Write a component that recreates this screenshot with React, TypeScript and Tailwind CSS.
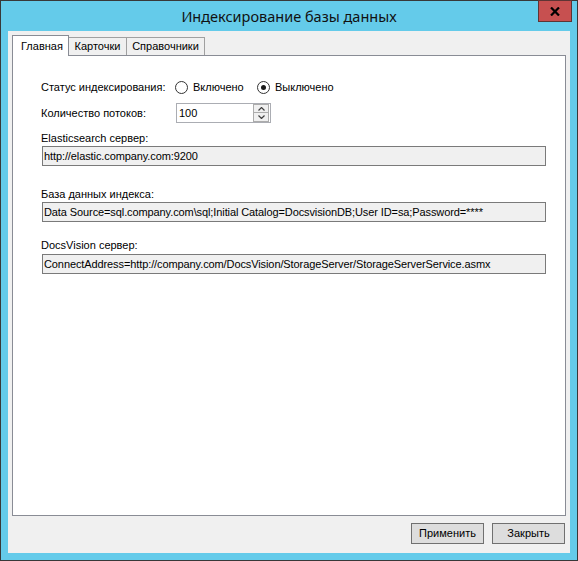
import React from "react";

function Radio({ checked }: { checked?: boolean }) {
  return (
    <span className="w-[13px] h-[13px] rounded-full border border-[#333333] bg-white flex items-center justify-center shrink-0">
      {checked && <span className="w-[5px] h-[5px] rounded-full bg-[#1a1a1a]" />}
    </span>
  );
}

function Field({ label, value, gapTop, gapMid }: { label: string; value: string; gapTop: string; gapMid: string }) {
  return (
    <>
      <div className={`${gapTop} h-[14px] flex items-center pl-[28px] text-black`}>{label}</div>
      <div className={`${gapMid} ml-[29px] w-[504px] h-[20px] border border-[#7a7a7a] bg-[#f0f0f0] flex items-center pl-[1px] text-black whitespace-nowrap overflow-hidden tracking-[-0.1px]`}>
        {value}
      </div>
    </>
  );
}

export default function App() {
  return (
    <div className="w-[578px] h-[561px] bg-[#64cbea] border border-[#383838] flex flex-col relative font-['Liberation_Sans',Arial,sans-serif] text-[11px] leading-[13px]">
      <div className="h-[30px] flex items-center justify-center text-[14.5px] text-[#111111] font-['Noto_Sans',sans-serif]">
        Индексирование базы данных
      </div>
      <div className="absolute top-[-1px] right-[5px] w-[34px] h-[22px] bg-[#c75050] border border-[#5e3434] flex items-center justify-center">
        <svg width="10" height="9" viewBox="0 0 10 9">
          <path d="M1 0.5 L9 8.5 M9 0.5 L1 8.5" stroke="#000" strokeWidth="2.2" />
        </svg>
      </div>

      <div className="flex-1 mx-[7px] mb-[7px] bg-[#f0f0f0] flex flex-col px-[4px] pt-[4px]">
        <div className="flex items-end h-[20px]">
          <div className="relative z-10 w-[57px] h-[21px] -mb-px bg-white border border-b-0 border-[#898c95] flex items-start pt-[4px] pl-[8px] text-black">
            Главная
          </div>
          <div className="w-[59px] h-[18px] -ml-px bg-[#f0f0f0] border border-b-0 border-[#a0a0a0] flex items-center justify-center text-black">
            Карточки
          </div>
          <div className="w-[79px] h-[18px] -ml-px bg-[#f0f0f0] border border-b-0 border-[#a0a0a0] flex items-center justify-center text-black">
            Справочники
          </div>
        </div>
        <div className="flex-1 bg-white border border-[#898c95] flex flex-col">
          <div className="mt-[23px] h-[16px] flex items-center pl-[28px] text-black">
            <span className="w-[134px]">Статус индексирования:</span>
            <Radio />
            <span className="ml-[5px] w-[64px]">Включено</span>
            <Radio checked />
            <span className="ml-[5px]">Выключено</span>
          </div>
          <div className="mt-[8px] h-[20px] flex items-center pl-[28px] text-black">
            <span className="w-[135px]">Количество потоков:</span>
            <div className="w-[95px] h-[20px] border border-[#abadb3] bg-white flex items-center">
              <span className="flex-1 pl-[2px]">100</span>
              <div className="w-[16px] h-[18px] flex flex-col mr-px">
                <div className="h-[9px] border border-[#acacac] bg-[#f0f0f0] flex items-center justify-center">
                  <svg width="7" height="4" viewBox="0 0 7 4">
                    <path d="M0.5 3.5 L3.5 0.5 L6.5 3.5" stroke="#404040" strokeWidth="1.2" fill="none" />
                  </svg>
                </div>
                <div className="h-[9px] border border-t-0 border-[#acacac] bg-[#f0f0f0] flex items-center justify-center">
                  <svg width="7" height="4" viewBox="0 0 7 4">
                    <path d="M0.5 0.5 L3.5 3.5 L6.5 0.5" stroke="#404040" strokeWidth="1.2" fill="none" />
                  </svg>
                </div>
              </div>
            </div>
          </div>
          <Field label="Elasticsearch сервер:" value="http://elastic.company.com:9200" gapTop="mt-[8px]" gapMid="mt-[1px]" />
          <Field
            label="База данных индекса:"
            value="Data Source=sql.company.com\sql;Initial Catalog=DocsvisionDB;User ID=sa;Password=****"
            gapTop="mt-[21px]"
            gapMid="mt-[1px]"
          />
          <Field
            label="DocsVision сервер:"
            value="ConnectAddress=http://company.com/DocsVision/StorageServer/StorageServerService.asmx"
            gapTop="mt-[16px]"
            gapMid="mt-[2px]"
          />
        </div>
        <div className="h-[37px] flex justify-end items-start pt-[7px] pr-[1px] gap-[8px]">
          <button className="w-[73px] h-[21px] bg-[#dddddd] border border-[#707070] text-black flex items-center justify-center">
            Применить
          </button>
          <button className="w-[73px] h-[21px] bg-[#dddddd] border border-[#707070] text-black flex items-center justify-center">
            Закрыть
          </button>
        </div>
      </div>
    </div>
  );
}
